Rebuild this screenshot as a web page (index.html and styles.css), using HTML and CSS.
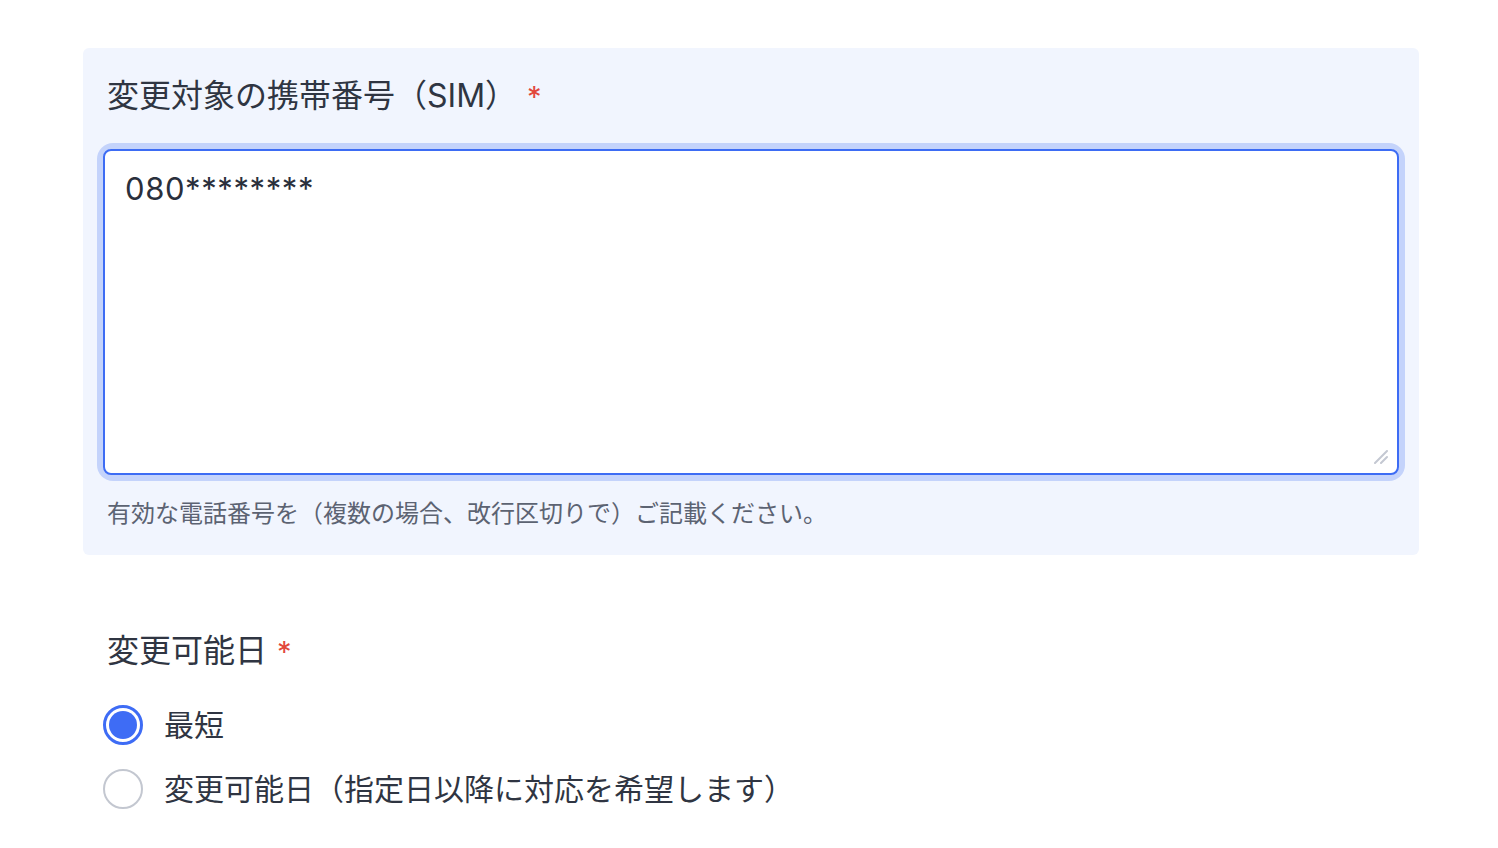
FILE: index.html
```html
<!DOCTYPE html>
<html lang="ja">
<head>
<meta charset="utf-8">
<title>SIM変更</title>
<link rel="stylesheet" href="styles.css">
</head>
<body>
<div class="page">
  <section class="panel">
    <label class="field-label" for="sim">変更対象の携帯番号（SIM）<span class="req">*</span></label>
    <div class="ta-wrap">
      <textarea id="sim" class="ta">080********</textarea>
      <svg class="grip" width="14" height="14" viewBox="0 0 14 14" aria-hidden="true">
        <path d="M1 13 L13 1 M7 13 L13 7" stroke="#c4c8d2" stroke-width="2" stroke-linecap="round" fill="none"/>
      </svg>
    </div>
    <p class="help">有効な電話番号を（複数の場合、改行区切りで）ご記載ください。</p>
  </section>
  <section class="group">
    <div class="field-label">変更可能日<span class="req">*</span></div>
    <div class="options">
      <label class="option"><span class="radio checked"></span><span class="opt-text">最短</span></label>
      <label class="option"><span class="radio"></span><span class="opt-text">変更可能日（指定日以降に対応を希望します）</span></label>
    </div>
  </section>
</div>
</body>
</html>
```

FILE: styles.css
```css
* { box-sizing: border-box; }
html, body { margin: 0; padding: 0; background: #ffffff; }
body {
  font-family: Inter, "Noto Sans CJK JP", sans-serif;
  color: #2e3440;
  width: 1498px;
  height: 848px;
  overflow: hidden;
}
.page {
  padding: 48px 79px 0 83px;
}
.panel {
  background: #f1f5fe;
  border-radius: 6px;
  padding: 24px 20px 26px 20px;
}
.field-label {
  display: block;
  font-size: 32px;
  line-height: 48px;
  padding-left: 4px;
  color: #2f3542;
}
.req {
  color: #e2473d;
  margin-left: 10px;
  font-size: 29px;
}
.ta-wrap {
  position: relative;
  margin-top: 28px;
  border-radius: 10px;
  box-shadow: 0 0 0 6px #c4d3fb;
  background: #fff;
}
.ta {
  display: block;
  width: 100%;
  height: 326px;
  border: 2px solid #3d6cf4;
  border-radius: 8px;
  padding: 14px 20px;
  font-family: Inter, "Noto Sans CJK JP", sans-serif;
  font-size: 31px;
  line-height: 48px;
  letter-spacing: 0.6px;
  color: #2a303c;
  background: #fff;
  outline: none;
  resize: none;
}
.grip {
  position: absolute;
  right: 11px;
  bottom: 11px;
}
.help {
  margin: 24px 0 0 0;
  padding-left: 4px;
  font-size: 24px;
  line-height: 30px;
  color: #5c6372;
}
.group {
  padding: 72px 20px 0 20px;
}
.options {
  margin-top: 25px;
  display: flex;
  flex-direction: column;
  gap: 16px;
}
.option {
  display: flex;
  align-items: center;
  gap: 21px;
  height: 48px;
}
.radio {
  width: 40px;
  height: 40px;
  border-radius: 50%;
  border: 2px solid #c3c7d0;
  background: #fff;
  flex: none;
  position: relative;
}
.radio.checked {
  border: 3px solid #3e6cf5;
}
.radio.checked::after {
  content: "";
  position: absolute;
  left: 3px;
  top: 3px;
  width: 28px;
  height: 28px;
  border-radius: 50%;
  background: #3e6cf5;
}
.opt-text {
  font-size: 30px;
  line-height: 48px;
  color: #2f3542;
}
```
